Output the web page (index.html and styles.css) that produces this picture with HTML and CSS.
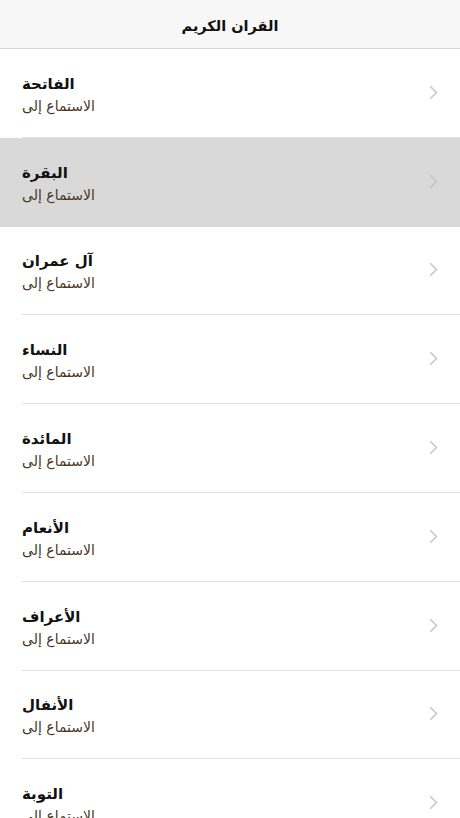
FILE: index.html
```html
<!DOCTYPE html>
<html lang="ar">
<head>
<meta charset="utf-8">
<title>القران الكريم</title>
<link rel="stylesheet" href="styles.css">
</head>
<body>
<header class="nav">
  <h1 class="nav-title">القران الكريم</h1>
</header>
<ul class="list">
  <li class="row"><div class="row-inner"><div class="texts"><div class="title">الفاتحة</div><div class="sub">الاستماع إلى</div></div><svg class="chev" viewBox="0 0 9 15"><path d="M1.2 1.2 L7.5 7.5 L1.2 13.8"/></svg></div></li>
  <li class="row selected"><div class="row-inner"><div class="texts"><div class="title">البقرة</div><div class="sub">الاستماع إلى</div></div><svg class="chev" viewBox="0 0 9 15"><path d="M1.2 1.2 L7.5 7.5 L1.2 13.8"/></svg></div></li>
  <li class="row"><div class="row-inner"><div class="texts"><div class="title">آل عمران</div><div class="sub">الاستماع إلى</div></div><svg class="chev" viewBox="0 0 9 15"><path d="M1.2 1.2 L7.5 7.5 L1.2 13.8"/></svg></div></li>
  <li class="row"><div class="row-inner"><div class="texts"><div class="title">النساء</div><div class="sub">الاستماع إلى</div></div><svg class="chev" viewBox="0 0 9 15"><path d="M1.2 1.2 L7.5 7.5 L1.2 13.8"/></svg></div></li>
  <li class="row"><div class="row-inner"><div class="texts"><div class="title">المائدة</div><div class="sub">الاستماع إلى</div></div><svg class="chev" viewBox="0 0 9 15"><path d="M1.2 1.2 L7.5 7.5 L1.2 13.8"/></svg></div></li>
  <li class="row"><div class="row-inner"><div class="texts"><div class="title">الأنعام</div><div class="sub">الاستماع إلى</div></div><svg class="chev" viewBox="0 0 9 15"><path d="M1.2 1.2 L7.5 7.5 L1.2 13.8"/></svg></div></li>
  <li class="row"><div class="row-inner"><div class="texts"><div class="title">الأعراف</div><div class="sub">الاستماع إلى</div></div><svg class="chev" viewBox="0 0 9 15"><path d="M1.2 1.2 L7.5 7.5 L1.2 13.8"/></svg></div></li>
  <li class="row"><div class="row-inner"><div class="texts"><div class="title">الأنفال</div><div class="sub">الاستماع إلى</div></div><svg class="chev" viewBox="0 0 9 15"><path d="M1.2 1.2 L7.5 7.5 L1.2 13.8"/></svg></div></li>
  <li class="row"><div class="row-inner"><div class="texts"><div class="title">التوبة</div><div class="sub">الاستماع إلى</div></div><svg class="chev" viewBox="0 0 9 15"><path d="M1.2 1.2 L7.5 7.5 L1.2 13.8"/></svg></div></li>
</ul>
</body>
</html>
```
FILE: styles.css
```css
html, body {
  margin: 0;
  padding: 0;
  background: #ffffff;
  font-family: "DejaVu Sans", "Noto Sans", sans-serif;
  height: 818px;
  overflow: hidden;
}
.nav {
  height: 48px;
  background: #f7f7f7;
  border-bottom: 1px solid #d6d6d6;
  display: flex;
  align-items: center;
  justify-content: center;
}
.nav-title {
  margin: 0;
  font-size: 14.5px;
  font-weight: bold;
  color: #111;
  direction: rtl;
  padding-top: 4px;
}
.list {
  list-style: none;
  margin: 0;
  padding: 0;
}
.row {
  padding-left: 22px;
  background: #fff;
}
.row.selected {
  background: #d9d9d9;
}
.row-inner {
  height: 87.8px;
  border-bottom: 1px solid #e3e3e3;
  display: flex;
  align-items: center;
  justify-content: space-between;
  padding-right: 22px;
}
.row.selected .row-inner {
  border-bottom-color: #d9d9d9;
}
.texts {
  direction: rtl;
  text-align: left;
  display: flex;
  flex-direction: column;
  align-items: flex-end;
  padding-top: 4px;
}
.title {
  font-size: 15px;
  font-weight: bold;
  color: #111;
  line-height: 22px;
}
.sub {
  font-size: 14px;
  color: #4a3728;
  line-height: 22px;
}
.chev {
  width: 9px;
  height: 15px;
  fill: none;
  stroke: #c7c7cc;
  stroke-width: 1.6;
  margin-top: -1px;
}
.row.selected .chev {
  stroke: #c4c4c4;
}
```
